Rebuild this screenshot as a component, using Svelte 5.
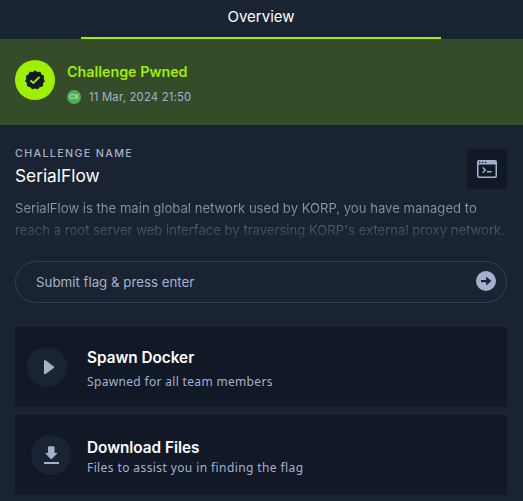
<script>
  const description =
    "SerialFlow is the main global network used by KORP, you have managed to reach a root server web interface by traversing KORP's external proxy network.";
</script>

<main>
  <nav><div class="tab"><span class="overview">Overview</span></div></nav>

  <section class="banner">
    <div class="badge">
      <svg width="20" height="20" viewBox="0 0 20 20">
        <path fill="#111927" stroke="#111927" stroke-width="1" stroke-linejoin="round" d="M10 .8 12.3 2.5 15.1 2.2 16.2 4.8 18.7 6 18.2 8.8 19.3 11 17.7 13.1 17.5 15.9 14.8 16.6 12.9 18.8 10 17.9 7.1 18.8 5.2 16.6 2.5 15.9 2.3 13.1.7 11 1.8 8.8 1.3 6 3.8 4.8 4.9 2.2 7.7 2.5Z" />
        <path fill="none" stroke="#9fef00" stroke-width="1.8" d="m5.4 10.3 2.9 2.7 6.2-6" />
      </svg>
    </div>
    <div class="pwned">
      <div class="line1">Challenge Pwned</div>
      <div class="meta"><span class="avatar">CX</span><span class="date">11 Mar, 2024 21:50</span></div>
    </div>
  </section>

  <section class="info">
    <div class="heading">
      <div>
        <div class="label">CHALLENGE NAME</div>
        <div class="name">SerialFlow</div>
      </div>
      <div class="category">
        <svg width="20" height="18" viewBox="0 0 20 18">
          <path fill="#a4b1cd" fill-rule="evenodd" d="M2 0h16a2 2 0 0 1 2 2v14a2 2 0 0 1-2 2H2a2 2 0 0 1-2-2V2a2 2 0 0 1 2-2ZM1.5 4.5V15.5a1 1 0 0 0 1 1h15a1 1 0 0 0 1-1V4.5ZM2 1.7v1.3h1.5V1.7ZM5 1.7v1.3h1.5V1.7ZM8 1.7v1.3h1.5V1.7Z" />
          <path fill="none" stroke="#a4b1cd" stroke-width="1.4" d="m5.6 7.5 2.8 2.6-2.8 2.7M10 11.8h4.5" />
        </svg>
      </div>
    </div>
    <p>{description}</p>
  </section>

  <div class="flag">
    <span>Submit flag &amp; press enter</span>
    <svg width="20" height="20" viewBox="0 0 20 20">
      <circle cx="10" cy="10" r="10" fill="#a4b1cd" />
      <path fill="#1a2332" d="M5 8.9h5.2V5.6L15.3 10l-5.1 4.5v-3.3H5Z" />
    </svg>
  </div>

  <div class="cards">
    <div class="card">
      <div class="round">
        <svg width="40" height="40" viewBox="0 0 40 40">
          <path fill="#a4b1cd" stroke="#a4b1cd" stroke-width="2" stroke-linejoin="round" d="M18 14v12.2L26.2 20.2Z" />
        </svg>
      </div>
      <div class="copy">
        <div class="title">Spawn Docker</div>
        <div class="sub">Spawned for all team members</div>
      </div>
    </div>
    <div class="card second">
      <div class="round">
        <svg width="40" height="40" viewBox="0 0 40 40">
          <path fill="#a4b1cd" stroke="#a4b1cd" stroke-width="1" stroke-linejoin="round" d="M17.6 11.8h5.4v6.6h2.8L20.3 24l-5.4-5.6h2.7Z" />
          <path fill="#a4b1cd" d="M13 27h15v2H13Z" />
        </svg>
      </div>
      <div class="copy">
        <div class="title">Download Files</div>
        <div class="sub">Files to assist you in finding the flag</div>
      </div>
    </div>
  </div>
</main>

<style>
  :global(body) { background: #1a2332; }
  main {
    box-sizing: border-box;
    height: 501px;
    overflow: hidden;
    background: #1a2332;
    color: #a4b1cd;
    font-family: Inter, "Liberation Sans", sans-serif;
    white-space: nowrap;
  }
  svg { display: block; flex: none; }
  nav { display: flex; height: 39px; padding-left: 81px; }
  .tab {
    box-sizing: border-box;
    width: 360px;
    height: 39px;
    border-bottom: 2px solid #9fef00;
    color: #fff;
    font-size: 15px;
    line-height: 33px;
    text-align: center;
  }
  .banner {
    box-sizing: border-box;
    display: flex;
    height: 86px;
    padding: 20px 15px 0;
    background: #344c2a;
    border-top: 1px solid #394a37;
  }
  .badge {
    display: flex;
    align-items: center;
    justify-content: center;
    width: 40px;
    height: 40px;
    border-radius: 50%;
    background: #9fef00;
  }
  .pwned { margin-left: 12px; }
  .line1 {
    height: 24px;
    color: #9fef00;
    font-size: 14.3px;
    font-weight: 600;
    line-height: 24px;
  }
  .meta { display: flex; align-items: center; height: 14px; margin-top: 6px; }
  .avatar {
    width: 14px;
    height: 14px;
    border-radius: 50%;
    background: #4caf50;
    color: #d5efd6;
    font: 7.5px/14px Roboto, sans-serif;
    text-align: center;
  }
  .date { margin-left: 8px; font-size: 11.3px; line-height: 14px; letter-spacing: .2px; }
  .info { height: 136px; padding: 0 16px 0 15px; box-sizing: border-box; }
  .heading { display: flex; justify-content: space-between; height: 64px; }
  .label { margin-top: 21px; height: 16px; font-size: 10.7px; font-weight: 500; line-height: 16px; letter-spacing: 1.35px; }
  .name { margin-top: 2px; height: 24px; color: #fff; font-size: 17.3px; line-height: 24px; }
  .category {
    display: flex;
    align-items: center;
    justify-content: center;
    width: 40px;
    height: 40px;
    margin-top: 24px;
    border-radius: 2px;
    background: #111927;
  }
  p {
    height: 58px;
    margin: 8px 0 0;
    font-size: 13.1px;
    line-height: 22px;
    white-space: normal;
    background: linear-gradient(#a4b1cd 0, #1a2332 49px);
    background-clip: text;
    -webkit-background-clip: text;
    color: transparent;
  }
  .flag {
    box-sizing: border-box;
    display: flex;
    justify-content: space-between;
    height: 42px;
    margin: 0 16px 0 15px;
    padding: 0 10px 0 20px;
    border: 1px solid #313f55;
    border-radius: 21px;
    font-size: 13.3px;
    line-height: 41px;
  }
  .flag svg { margin-top: 9px; }
  .cards { display: flex; flex-direction: column; gap: 8px; margin: 24px 16px 0 15px; }
  .card {
    box-sizing: border-box;
    display: flex;
    gap: 20px;
    height: 80px;
    padding: 20px 12px;
    border-radius: 2px;
    background: #111927;
  }
  .second { gap: 16px; padding-left: 16px; }
  .round { width: 40px; height: 40px; border-radius: 50%; background: #1a2332; }
  .title { height: 22px; color: #fff; font-size: 15.3px; font-weight: 600; line-height: 22px; }
  .sub { height: 18px; margin-top: 4px; font-family: "Noto Sans", sans-serif; font-size: 12px; line-height: 18px; letter-spacing: .33px; }
  .second .title { margin-top: 2px; }
  .second .sub { margin-top: 0; letter-spacing: .4px; }
</style>
